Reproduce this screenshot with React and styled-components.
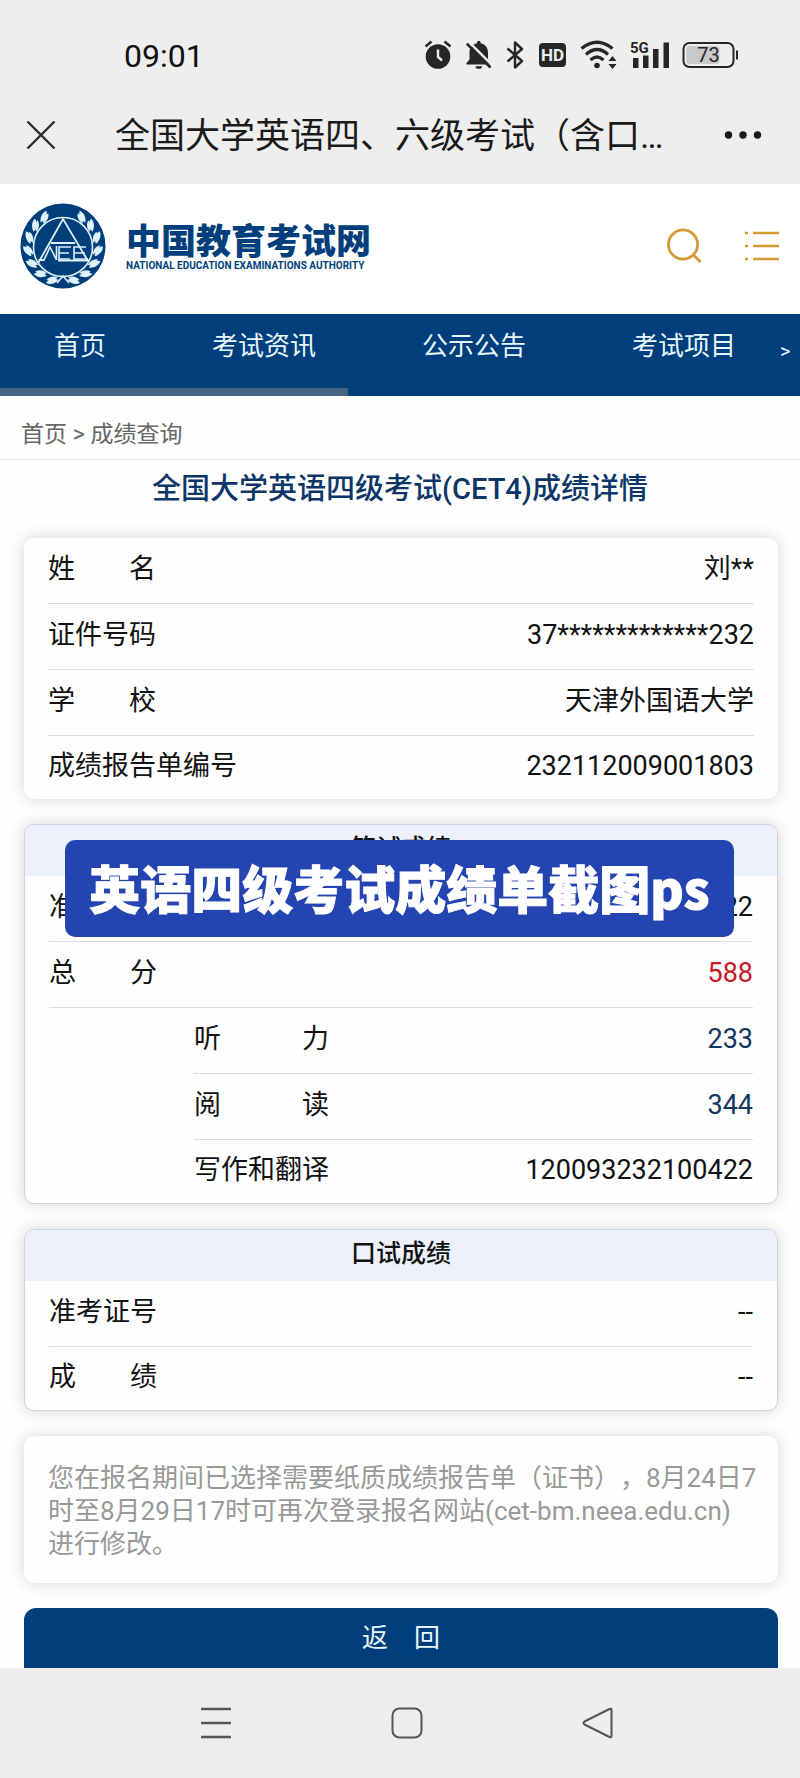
import React from "react";
import styled, { createGlobalStyle } from "styled-components";

const NAVY = "#003f7c";
const GOLD = "#d39a35";
const INK = "#262626";

const GlobalStyle = createGlobalStyle`
  * { box-sizing: border-box; }
  body {
    margin: 0;
    background: #fefefe;
    color: #111;
    font-family: Roboto, "Noto Sans CJK SC", sans-serif;
  }
  button { border: 0; padding: 0; background: none; font: inherit; color: inherit; cursor: pointer; }
  a { color: inherit; text-decoration: none; }
  svg { display: block; flex: none; }
`;

const Screen = styled.div`
  display: flex;
  flex-direction: column;
`;

const StatusBar = styled.div`
  display: flex;
  align-items: center;
  justify-content: space-between;
  height: 90px;
  padding: 20px 61px 0 124px;
  background: #eee;
  color: #111;
`;

const Clock = styled.time`
  padding-top: 2px;
  font-size: 32px;
  line-height: 36px;
`;

const StatusIcons = styled.div`
  display: flex;
  align-items: center;
  gap: 13px;
`;

const AppBar = styled.div`
  display: flex;
  align-items: center;
  height: 94px;
  padding: 0 38px 4px 26px;
  background: #eee;
  color: #1a1a1a;
`;

const AppTitle = styled.div`
  flex: 1;
  margin-left: 59px;
  padding-top: 4px;
  font-size: 35px;
  line-height: 48px;
  white-space: nowrap;
`;

const SiteHeader = styled.header`
  display: flex;
  align-items: center;
  height: 130px;
  padding: 0 20px 6px;
  background: #fff;
`;

const Brand = styled.a`
  display: flex;
  align-items: center;
  gap: 20px;
  margin-right: auto;
  color: ${NAVY};
`;

const BrandText = styled.span`
  display: flex;
  flex-direction: column;
`;

const BrandName = styled.span`
  font-family: "Noto Sans CJK SC", sans-serif;
  font-size: 35px;
  font-weight: 900;
  line-height: 40px;
`;

const BrandSub = styled.span`
  font-family: Roboto, sans-serif;
  font-size: 10px;
  font-weight: 700;
  line-height: 14px;
  white-space: nowrap;
`;

const HeaderTools = styled.div`
  display: flex;
  align-items: center;
  gap: 42px;
`;

const SiteNav = styled.nav`
  position: relative;
  display: flex;
  align-items: center;
  gap: 106px;
  height: 82px;
  padding: 0 8px 18px 54px;
  background: ${NAVY};
  color: #e9f8ff;
  font-size: 26px;
  line-height: 36px;
  white-space: nowrap;
  overflow: hidden;
`;

const ScrollThumb = styled.span`
  position: absolute;
  left: 0;
  bottom: 0;
  width: 348px;
  height: 8px;
  background: #466484;
`;

const NavMore = styled.button`
  margin: 10px 0 0 -62px;
  font-size: 20px;
`;

const Breadcrumb = styled.nav`
  height: 64px;
  padding: 22px 21px 0;
  border-bottom: 1px solid #e8e8e8;
  color: #666;
  font-size: 23px;
  line-height: 34px;
`;

const PageTitle = styled.h1`
  margin: 0;
  height: 78px;
  padding-top: 10px;
  color: #0c3568;
  font-size: 29px;
  font-weight: 500;
  line-height: 38px;
  text-align: center;
`;

const Content = styled.main`
  display: flex;
  flex-direction: column;
  gap: 25px;
  padding: 0 22px 0 24px;
`;

const Card = styled.section`
  position: relative;
  border: ${(p) => (p.$outlined ? "1px solid #c9d5e2" : "0")};
  border-radius: 10px;
  background: #fefefe;
  box-shadow: 0 0 16px rgba(0, 0, 0, 0.16);
`;

const CardHeading = styled.h2`
  margin: 0;
  height: 51px;
  border-radius: 9px 9px 0 0;
  background: #ecf1fb;
  font-size: 25px;
  font-weight: 500;
  line-height: 48px;
  text-align: center;
`;

const Rows = styled.dl`
  margin: 0;
  padding: 0 24px;
`;

const Row = styled.div`
  display: flex;
  align-items: center;
  justify-content: space-between;
  height: 66px;
  margin-left: ${(p) => (p.$nested ? "145px" : "0")};
  padding-bottom: 4px;
  border-bottom: 1px solid #d9dbde;
  font-size: 27px;
  line-height: 36px;
  white-space: pre;

  &:last-child {
    height: 63px;
    border-bottom: 0;
  }
`;

const Label = styled.dt``;

const VALUE_COLORS = { total: "#cb1627", part: "#12365f" };

const Value = styled.dd`
  margin: 0;
  color: ${(p) => VALUE_COLORS[p.$tone] || "#111"};
`;

const Caption = styled.div`
  position: absolute;
  top: 15px;
  left: 40px;
  right: 43px;
  height: 97px;
  border-radius: 10px;
  background: #2444b2;
  color: #fff;
  font-family: "Noto Sans CJK SC", sans-serif;
  font-size: 51px;
  font-weight: 900;
  line-height: 94px;
  text-align: center;
  white-space: nowrap;
  -webkit-text-stroke: 1px #fff;
`;

const Notice = styled.p`
  margin: 0;
  padding: 26px 16px 22px 24px;
  color: #999;
  font-size: 26px;
  line-height: 33px;
  text-spacing-trim: space-all;
`;

const BackButton = styled.button`
  height: 60px;
  border-radius: 12px 12px 0 0;
  background: ${NAVY};
  color: #e9f8ff;
  font-size: 26px;
  line-height: 36px;
`;

const SystemNav = styled.nav`
  display: flex;
  align-items: center;
  justify-content: center;
  gap: 159px;
  height: 110px;
  padding-left: 14px;
  background: #eee;
  color: #555;
`;

function AlarmIcon() {
  return (
    <svg width="28" height="30" viewBox="0 0 28 30" fill="none">
      <circle cx="14" cy="16.500" r="12.300" fill={INK} />
      <path d="M1.500 6.500 7.500 1.500M26.500 6.500 20.500 1.500" stroke={INK} strokeWidth="2.400" />
      <path d="M14 9.500v7.500l4 3.500" stroke="#eee" strokeWidth="2.400" />
    </svg>
  );
}

function BellOffIcon() {
  return (
    <svg width="28" height="30" viewBox="0 0 28 30">
      <path
        d="M12 3.200V2.500a1.800 1.800 0 0 1 3.600 0v.7c4.600 1 7.400 4.500 7.400 9.300v7l3 3.500v1.500H1.500V23l3-3.500v-7c0-4.800 2.900-8.300 7.500-9.300z"
        fill={INK}
      />
      <path d="M10.500 26.200h6.600a3.300 2.600 0 0 1-6.600 0z" fill={INK} />
      <path d="M3.800 1.800 27.800 25.800" stroke="#eee" strokeWidth="2.600" />
      <path d="M1.800 3.600 25.500 27.500" stroke={INK} strokeWidth="2.600" />
    </svg>
  );
}

function BluetoothIcon() {
  return (
    <svg width="18" height="30" viewBox="0 0 18 30" fill="none" stroke={INK} strokeWidth="2.400" strokeLinejoin="round">
      <path d="M1.500 8.500 16 21 9 27.500v-25L16 9 1.500 21.500" />
    </svg>
  );
}

function HdIcon() {
  return (
    <svg width="30" height="26" viewBox="0 0 30 26">
      <rect x="2" y="1" width="27" height="24" rx="4" fill={INK} />
      <text x="15.500" y="19" textAnchor="middle" fontFamily="Roboto, sans-serif" fontWeight="700" fontSize="17" fill="#eee">
        HD
      </text>
    </svg>
  );
}

function WifiIcon() {
  return (
    <svg width="37" height="30" viewBox="0 0 37 30" fill="none" stroke={INK} strokeWidth="3.200">
      <path d="M1.500 8.500Q17 -4 32.500 8.500" />
      <path d="M6 14.500Q17 4.500 28 14.500" />
      <path d="M10.500 20Q17 14 23.500 20" />
      <circle cx="17" cy="25.500" r="2.800" fill={INK} stroke="none" />
      <path d="M32.500 16 36.500 21h-8zM32.500 29 36.500 24h-8z" fill={INK} stroke="none" />
    </svg>
  );
}

function SignalIcon() {
  return (
    <svg width="39" height="30" viewBox="0 0 39 30" fill={INK}>
      <rect x="3" y="18" width="5.500" height="10" />
      <rect x="13" y="15.500" width="5.500" height="12.500" />
      <rect x="23" y="9" width="5.500" height="19" />
      <rect x="33.500" y="2.500" width="5.500" height="25.500" />
      <text x="0" y="12.500" fontFamily="Roboto, sans-serif" fontWeight="700" fontSize="15">
        5G
      </text>
    </svg>
  );
}

function BatteryIcon() {
  return (
    <svg width="57" height="28" viewBox="0 0 57 28">
      <rect x="1.500" y="2" width="50" height="24" rx="6" fill="none" stroke={INK} strokeWidth="2" />
      <rect x="4.500" y="5" width="33" height="18" rx="3" fill="#c9c9c9" />
      <path d="M55 9.500v9" stroke={INK} strokeWidth="2" />
      <text x="26.500" y="21" textAnchor="middle" fontFamily="Roboto, sans-serif" fontSize="20" fill={INK}>
        73
      </text>
    </svg>
  );
}

const LEAF_ANGLES = [18, 40, 62, 84, 106, 128, 148];

function Emblem() {
  return (
    <svg width="86" height="86" viewBox="0 0 86 86" fill="none">
      <circle cx="43" cy="43" r="42.500" fill={NAVY} />
      {[1, -1].map((side) => (
        <g key={side} transform={side === 1 ? undefined : "translate(86 0) scale(-1 1)"} fill="#dff1fa">
          {LEAF_ANGLES.map((angle) => (
            <g key={angle} transform={`rotate(${angle - 180} 43 44) translate(43 8.500)`}>
              <path d="M5 -4C1 -5 -4 -2 -6 3C-1 3.500 4 1 5 -4z" />
              <path d="M5.500 -1C4 3 0 5.500 -4.500 5C-2 1.500 1 -1 5.500 -1z" />
            </g>
          ))}
        </g>
      ))}
      <circle cx="43" cy="44" r="29.500" fill={NAVY} stroke="#dff1fa" strokeWidth="1.600" />
      <path d="M18.500 59.500 43 16 68 58M31 40h24M18.500 57h6M38 57.500h31" stroke="#dff1fa" strokeWidth="1.800" />
      <path d="M24 57 30 44 36.500 57V43" stroke="#dff1fa" strokeWidth="1.600" />
      <path d="M51 44H39v12h11M39 50h10M66 44H54v12h14M54 50h11" stroke="#dff1fa" strokeWidth="1.600" />
      <path d="M37 80 43 73 49 80" stroke="#dff1fa" strokeWidth="1.600" />
    </svg>
  );
}

function SearchIcon() {
  return (
    <svg width="36" height="36" viewBox="0 0 36 36" fill="none" stroke={GOLD} strokeWidth="2.800">
      <circle cx="17" cy="16.500" r="14.600" />
      <path d="m27 26.500 7.500 7.500" />
    </svg>
  );
}

function ListIcon() {
  return (
    <svg width="36" height="36" viewBox="0 0 36 36" stroke={GOLD} strokeWidth="2.400">
      <path d="M1 5h3M1 18h3M1 31h3M9 5h26M9 18h26M9 31h26" />
    </svg>
  );
}

function CloseIcon() {
  return (
    <svg width="30" height="30" viewBox="0 0 30 30" stroke="#2b2b2b" strokeWidth="2.400">
      <path d="M1.500 1.500 28.500 28.500M28.500 1.500 1.500 28.500" />
    </svg>
  );
}

function MoreIcon() {
  return (
    <svg width="38" height="10" viewBox="0 0 38 10" fill="#1a1a1a">
      <circle cx="4.500" cy="5" r="3.700" />
      <circle cx="19" cy="5" r="3.700" />
      <circle cx="33.500" cy="5" r="3.700" />
    </svg>
  );
}

function RecentsIcon() {
  return (
    <svg width="32" height="32" viewBox="0 0 32 32" stroke="currentColor" strokeWidth="2.400">
      <path d="M1 2h30M1 16h30M1 30h30" />
    </svg>
  );
}

function HomeIcon() {
  return (
    <svg width="32" height="32" viewBox="0 0 32 32" fill="none" stroke="currentColor" strokeWidth="2">
      <rect x="1.500" y="1.500" width="29" height="29" rx="7" />
    </svg>
  );
}

function BackIcon() {
  return (
    <svg width="32" height="32" viewBox="0 0 32 32" fill="none" stroke="currentColor" strokeWidth="2" strokeLinejoin="round">
      <path d="M27.500 2 Q29.500 1 29.500 3V29Q29.500 31 27.500 30L2.500 17.500Q0.500 16 2.500 14.500z" />
    </svg>
  );
}

const NAV_ITEMS = ["首页", "考试资讯", "公示公告", "考试项目"];

const PERSON = [
  { label: "姓\u3000\u3000名", value: "刘**" },
  { label: "证件号码", value: "37*************232" },
  { label: "学\u3000\u3000校", value: "天津外国语大学" },
  { label: "成绩报告单编号", value: "232112009001803" },
];

const WRITTEN = [
  { label: "准考证号", value: "120093232100422" },
  { label: "总\u3000\u3000分", value: "588", tone: "total" },
  { label: "听\u3000\u3000\u3000力", value: "233", tone: "part", nested: true },
  { label: "阅\u3000\u3000\u3000读", value: "344", tone: "part", nested: true },
  { label: "写作和翻译", value: "120093232100422", nested: true },
];

const ORAL = [
  { label: "准考证号", value: "--" },
  { label: "成\u3000\u3000绩", value: "--" },
];

function DataRows({ items }) {
  return (
    <Rows>
      {items.map((item) => (
        <Row key={item.label} $nested={item.nested}>
          <Label>{item.label}</Label>
          <Value $tone={item.tone}>{item.value}</Value>
        </Row>
      ))}
    </Rows>
  );
}

export default function App() {
  return (
    <Screen>
      <GlobalStyle />
      <StatusBar>
        <Clock>09:01</Clock>
        <StatusIcons>
          <AlarmIcon />
          <BellOffIcon />
          <BluetoothIcon />
          <HdIcon />
          <WifiIcon />
          <SignalIcon />
          <BatteryIcon />
        </StatusIcons>
      </StatusBar>
      <AppBar>
        <button aria-label="关闭"><CloseIcon /></button>
        <AppTitle>全国大学英语四、六级考试（含口…</AppTitle>
        <button aria-label="更多"><MoreIcon /></button>
      </AppBar>
      <SiteHeader>
        <Brand href="#">
          <Emblem />
          <BrandText>
            <BrandName>中国教育考试网</BrandName>
            <BrandSub>NATIONAL EDUCATION EXAMINATIONS AUTHORITY</BrandSub>
          </BrandText>
        </Brand>
        <HeaderTools>
          <button aria-label="搜索"><SearchIcon /></button>
          <button aria-label="菜单"><ListIcon /></button>
        </HeaderTools>
      </SiteHeader>
      <SiteNav>
        {NAV_ITEMS.map((item) => (
          <a key={item} href="#">{item}</a>
        ))}
        <NavMore aria-label="更多栏目">&gt;</NavMore>
        <ScrollThumb />
      </SiteNav>
      <Breadcrumb>
        <a href="#">首页</a> &gt; 成绩查询
      </Breadcrumb>
      <PageTitle>全国大学英语四级考试(CET4)成绩详情</PageTitle>
      <Content>
        <Card>
          <DataRows items={PERSON} />
        </Card>
        <Card $outlined>
          <CardHeading>笔试成绩</CardHeading>
          <DataRows items={WRITTEN} />
          <Caption>英语四级考试成绩单截图ps</Caption>
        </Card>
        <Card $outlined>
          <CardHeading>口试成绩</CardHeading>
          <DataRows items={ORAL} />
        </Card>
        <Card>
          <Notice>
            您在报名期间已选择需要纸质成绩报告单（证书），8月24日7时至8月29日17时可再次登录报名网站(cet-bm.neea.edu.cn)
            <br />
            进行修改。
          </Notice>
        </Card>
        <BackButton>返{"\u3000"}回</BackButton>
      </Content>
      <SystemNav>
        <button aria-label="最近任务"><RecentsIcon /></button>
        <button aria-label="主屏幕"><HomeIcon /></button>
        <button aria-label="返回"><BackIcon /></button>
      </SystemNav>
    </Screen>
  );
}
